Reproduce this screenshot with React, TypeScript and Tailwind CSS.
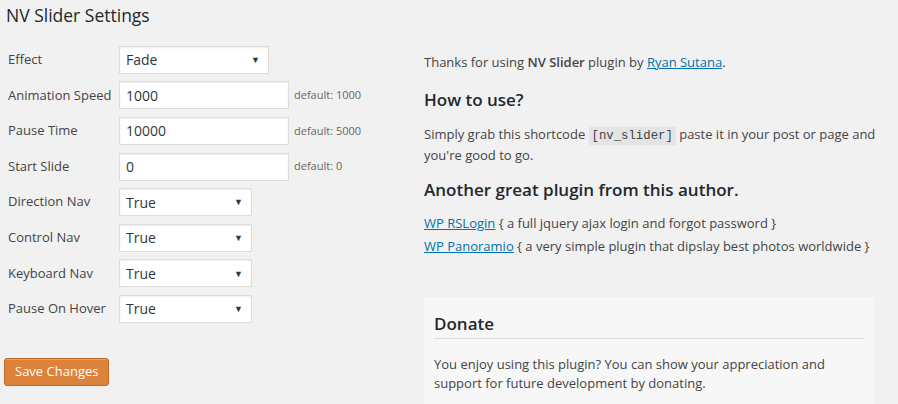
import React from 'react';

const font = { fontFamily: '"Open Sans", "Liberation Sans", sans-serif' };

const rows = [
  { label: 'Effect', kind: 'select', value: 'Fade', width: 'w-[150px]' },
  { label: 'Animation Speed', kind: 'input', value: '1000', hint: 'default: 1000' },
  { label: 'Pause Time', kind: 'input', value: '10000', hint: 'default: 5000' },
  { label: 'Start Slide', kind: 'input', value: '0', hint: 'default: 0' },
  { label: 'Direction Nav', kind: 'select', value: 'True', width: 'w-[133px]' },
  { label: 'Control Nav', kind: 'select', value: 'True', width: 'w-[133px]' },
  { label: 'Keyboard Nav', kind: 'select', value: 'True', width: 'w-[133px]' },
  { label: 'Pause On Hover', kind: 'select', value: 'True', width: 'w-[133px]' },
];

function Field({ row }: { row: (typeof rows)[number] }) {
  if (row.kind === 'select') {
    return (
      <div
        className={`${row.width} h-[28px] bg-white border border-[#dddddd] shadow-[inset_0_1px_2px_rgba(0,0,0,0.07)] flex items-center justify-between pl-[6px] pr-[8px]`}
      >
        <span className="text-[14px] text-[#32373c]">{row.value}</span>
        <span className="text-[9px] text-[#32373c]">▼</span>
      </div>
    );
  }
  return (
    <div className="flex items-center">
      <div className="w-[170px] h-[28px] bg-white border border-[#dddddd] shadow-[inset_0_1px_2px_rgba(0,0,0,0.07)] flex items-center pl-[6px]">
        <span className="text-[14px] text-[#32373c]">{row.value}</span>
      </div>
      <span className="ml-[5px] text-[11px] text-[#666666]">{row.hint}</span>
    </div>
  );
}

export default function App() {
  return (
    <div className="w-[898px] h-[404px] overflow-hidden bg-[#f1f1f1] text-[#444444]" style={font}>
      <h1 className="pl-[6px] pt-[2px] text-[17.5px] font-normal text-[#23282d] leading-[26px]">NV Slider Settings</h1>

      <div className="flex">
        {/* settings form */}
        <div className="w-[424px] shrink-0">
          <div className="mt-[14px]">
            {rows.map((row) => (
              <div key={row.label} className="h-[35.6px] flex items-center">
                <div className="w-[119px] pl-[8px] text-[13px]">{row.label}</div>
                <Field row={row} />
              </div>
            ))}
          </div>
          <button className="mt-[31px] ml-[4px] h-[28px] px-[10px] bg-[#dd823b] border border-[#c36922] rounded-[3px] text-white text-[13px] shadow-[inset_0_1px_0_rgba(255,255,255,0.25)]">
            Save Changes
          </button>
        </div>

        {/* info column */}
        <div className="flex-1 pt-[25px] text-[13px] leading-[19.5px]">
          <p>
            Thanks for using <b className="font-semibold">NV Slider</b> plugin by{' '}
            <a className="text-[#0073aa] underline">Ryan Sutana</a>.
          </p>
          <h3 className="mt-[15px] text-[17px] font-semibold text-[#23282d] leading-[24px]">How to use?</h3>
          <p className="mt-[13px]">
            Simply grab this shortcode{' '}
            <code
              className="bg-[#e4e4e4] px-[3px] py-[2px] text-[12.3px]"
              style={{ fontFamily: '"Liberation Mono", "DejaVu Sans Mono", monospace' }}
            >
              [nv_slider]
            </code>{' '}
            paste it in your post or page and you're good to go.
          </p>
          <h3 className="mt-[12px] text-[17px] font-semibold text-[#23282d] leading-[24px]">Another great plugin from this author.</h3>
          <p className="mt-[12px]">
            <a className="text-[#0073aa] underline">WP RSLogin</a> {'{ a full jquery ajax login and forgot password }'}
          </p>
          <p className="mt-[4px]">
            <a className="text-[#0073aa] underline">WP Panoramio</a> {'{ a very simple plugin that dipslay best photos worldwide }'}
          </p>

          <div className="mt-[40px] w-[450px] bg-[#f7f7f7] px-[10px] pt-[15px] pb-[20px]">
            <h3 className="text-[17px] font-semibold text-[#23282d] leading-[24px] pb-[2px] border-b border-[#dddddd]">Donate</h3>
            <p className="mt-[16px]">
              You enjoy using this plugin? You can show your appreciation and support for future development by donating.
            </p>
          </div>
        </div>
      </div>
    </div>
  );
}
